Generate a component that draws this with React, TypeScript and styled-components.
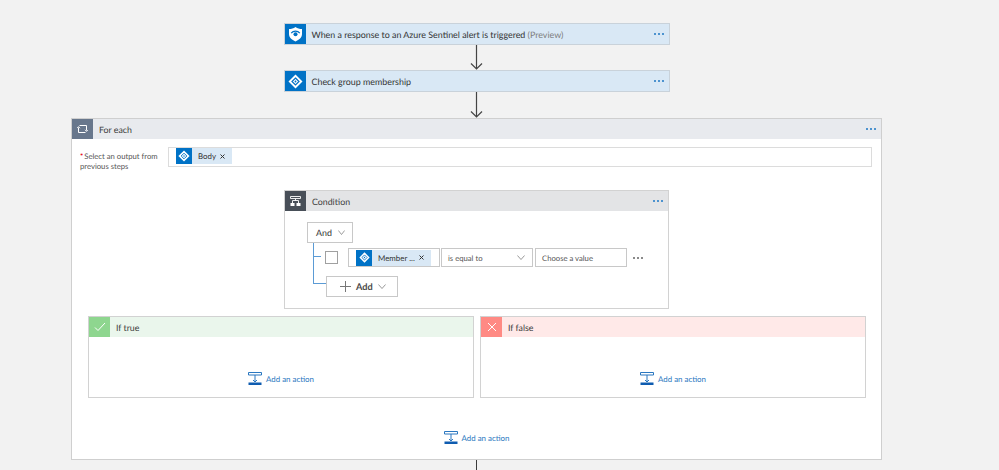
import React from "react";
import styled, { createGlobalStyle } from "styled-components";

const Global = createGlobalStyle`
  html, body { margin: 0; padding: 0; background: #f2f2f2; }
  body { width: 999px; height: 470px; overflow: hidden; font-family: Lato, "Noto Sans", "Liberation Sans", sans-serif; color: #3b3b3b; text-rendering: geometricPrecision; }
  * { box-sizing: border-box; }
`;

const Page = styled.div`
  display: flex;
  flex-direction: column;
  align-items: center;
  width: 811px;
  margin-left: 71px;
  padding-top: 23px;
`;

const StepCard = styled.div`
  display: flex;
  align-items: stretch;
  width: 386px;
  height: 22px;
  background: #d9e8f5;
  border: 1px solid #c9d2da;
`;

const IconTile = styled.div<{ $bg: string; $w?: number }>`
  flex: none;
  width: ${(p) => p.$w ?? 21}px;
  display: flex;
  align-items: center;
  justify-content: center;
  background: ${(p) => p.$bg};
`;

const StepTitle = styled.div`
  flex: 1;
  display: flex;
  align-items: center;
  padding: 1px 0 0 6px;
  font-size: 8.9px;
  color: #333;
  white-space: pre;
`;

const Muted = styled.span`
  color: #7d7d7d;
`;

const Dots = styled.div<{ $c?: string }>`
  flex: none;
  width: 15px;
  display: flex;
  align-items: center;
  justify-content: flex-start;
  gap: 2px;
  span {
    width: 2px;
    height: 2px;
    background: ${(p) => p.$c ?? "#4d93cf"};
  }
`;

const Loop = styled.div`
  width: 811px;
  height: 342px;
  background: #fff;
  border: 1px solid #cfcfcf;
  display: flex;
  flex-direction: column;
`;

const LoopHeader = styled.div`
  height: 20px;
  display: flex;
  align-items: stretch;
  background: #e8eaee;
`;

const HeadTitle = styled.div`
  flex: 1;
  display: flex;
  align-items: center;
  padding: 1px 0 0 6px;
  font-size: 8.8px;
  color: #3b3b3b;
`;

const OutputRow = styled.div`
  display: flex;
  margin-top: 8px;
  padding-left: 8px;
`;

const OutputLabel = styled.div`
  width: 88px;
  padding-top: 4px;
  font-size: 7.7px;
  line-height: 10px;
  color: #555;
  b { color: #e81123; font-weight: 700; margin-right: 1px; }
`;

const OutputInput = styled.div`
  width: 704px;
  height: 20px;
  border: 1px solid #dcdcdc;
  padding-left: 7px;
  background: #fff;
`;

const Token = styled.div<{ $w: number }>`
  display: flex;
  align-items: center;
  width: ${(p) => p.$w}px;
  height: 16px;
  background: #d9e8f5;
  font-size: 7.9px;
  color: #333;
`;

const TokenText = styled.span`
  flex: 1;
  padding-left: 6px;
  white-space: nowrap;
`;

const TokenClose = styled.span`
  flex: none;
  display: flex;
  margin-right: 7px;
`;

const Condition = styled.div`
  width: 385px;
  height: 119px;
  margin: 19px 0 0 212px;
  border: 1px solid #d2d2d2;
  background: #fff;
`;

const ConditionHeader = styled.div`
  height: 20px;
  display: flex;
  background: #e3e4e6;
`;

const ConditionBody = styled.div`
  position: relative;
  height: 97px;
  padding: 11px 0 0 22px;
`;

const AndButton = styled.div`
  width: 46px;
  height: 21px;
  display: flex;
  align-items: center;
  padding-left: 8px;
  gap: 6px;
  border: 1px solid #c8c8c8;
  font-size: 8.9px;
  color: #333;
  background: #fff;
`;

const ClauseRow = styled.div`
  display: flex;
  align-items: center;
  height: 19px;
  margin: 5px 0 0 18px;
`;

const Check = styled.div`
  width: 13px;
  height: 13px;
  border: 1px solid #a0a0a0;
  background: #fff;
  margin-right: 10px;
`;

const Field = styled.div<{ $w: number; $pad?: number }>`
  width: ${(p) => p.$w}px;
  height: 19px;
  margin-right: 1px;
  border: 1px solid #c8c8c8;
  display: flex;
  align-items: center;
  justify-content: space-between;
  padding: 0 7px 0 ${(p) => p.$pad ?? 6}px;
  font-size: 7.7px;
  color: #555;
  background: #fff;
`;

const FieldGap = styled.div`
  width: 1px;
`;

const ClauseDots = styled.div`
  margin-left: 5px;
  display: flex;
  gap: 2px;
  span { width: 2px; height: 2px; background: #8a8a8a; }
`;

const AddButton = styled.div`
  width: 72px;
  height: 21px;
  margin: 9px 0 0 19px;
  border: 1px solid #c8c8c8;
  display: flex;
  align-items: center;
  padding-left: 13px;
  gap: 5px;
  font-size: 9.2px;
  font-weight: 700;
  color: #4a4a4a;
  background: #fff;
`;

const TreeLine = styled.div`
  position: absolute;
  left: 28px;
  top: 32px;
  width: 13px;
  height: 41px;
  border-left: 1px solid #5b9bd5;
  border-bottom: 1px solid #5b9bd5;
`;

const TreeTick = styled.div`
  position: absolute;
  left: 29px;
  top: 45px;
  width: 7px;
  height: 1px;
  background: #5b9bd5;
`;

const Branches = styled.div`
  display: flex;
  gap: 6px;
  margin: 7px 0 0 16px;
`;

const Branch = styled.div`
  width: 386px;
  height: 82px;
  display: flex;
  flex-direction: column;
  border: 1px solid #d2d2d2;
  background: #fff;
`;

const BranchHeader = styled.div<{ $bg: string }>`
  height: 20px;
  display: flex;
  background: ${(p) => p.$bg};
`;

const ActionRow = styled.div<{ $top: number }>`
  display: flex;
  align-items: center;
  justify-content: center;
  gap: 4px;
  margin-top: ${(p) => p.$top}px;
  font-size: 7.9px;
  color: #2a77c0;
`;

const ActionLabel = styled.span`
  padding-top: 1px;
`;

const Connector = styled.div`
  width: 1px;
  height: 12px;
  background: #3b3b3b;
`;

const ArrowSvg = styled.svg`
  display: block;
`;

const Arrow = ({ h = 25 }: { h?: number }) => (
  <ArrowSvg width="13" height={h} viewBox={`0 0 13 ${h}`}>
    <path d={`M6.5 0V${h - 1}M1 ${h - 6.5}L6.5 ${h - 1}L12 ${h - 6.5}`} fill="none" stroke="#444" strokeWidth="1.2" />
  </ArrowSvg>
);

const Shield = () => (
  <svg width="15" height="16" viewBox="0 0 15 16">
    <path d="M7.5 1C9.5 2.4 11.6 3 14 3V8C14 11.5 11.2 13.8 7.5 15.5C3.8 13.8 1 11.5 1 8V3C3.4 3 5.5 2.4 7.5 1Z" fill="#fff" />
    <path d="M3.2 7.2C5.4 4.4 9.6 4.4 11.8 7.2" fill="none" stroke="#0072c6" strokeWidth="1.2" />
    <circle cx="7.5" cy="8.2" r="2" fill="#0072c6" />
  </svg>
);

const Diamond = ({ s = 15, c = "#0072c6" }: { s?: number; c?: string }) => (
  <svg width={s} height={s} viewBox="0 0 15 15">
    <path d="M7.5 0.5L14.5 7.5L7.5 14.5L0.5 7.5Z" fill="#fff" />
    <path d="M7.5 4L11 7.5L7.5 11L4 7.5Z" fill="none" stroke={c} strokeWidth="1.2" />
    <circle cx="7.5" cy="7.5" r="0.9" fill={c} />
  </svg>
);

const LoopIcon = () => (
  <svg width="11" height="8" viewBox="0 0 11 8">
    <path d="M2.5 0.5H9.5V5.5M8.5 7.5H1.5V2.5" fill="none" stroke="#fff" strokeWidth="1" />
    <path d="M0 3.2L1.5 1.6L3 3.2M8 4.8L9.5 6.4L11 4.8" fill="none" stroke="#fff" strokeWidth="0.9" />
  </svg>
);

const ConditionIcon = () => (
  <svg width="11" height="10" viewBox="0 0 11 10">
    <path d="M0.5 0.5H10.5V2.5H0.5Z M5.5 2.5V4.5 M2.5 4.5H8.5 M2.5 4.5V7 M8.5 4.5V7" fill="none" stroke="#fff" strokeWidth="0.9" />
    <path d="M0.5 7H4.5V10H0.5Z M6.5 7H10.5V10H6.5Z" fill="#fff" />
  </svg>
);

const CheckIcon = () => (
  <svg width="12" height="10" viewBox="0 0 12 10">
    <path d="M1 5.5L4 8.5L11 1" fill="none" stroke="#fff" strokeWidth="1" />
  </svg>
);

const CrossIcon = () => (
  <svg width="10" height="10" viewBox="0 0 10 10">
    <path d="M1 1L9 9M9 1L1 9" fill="none" stroke="#fff" strokeWidth="1" />
  </svg>
);

const X = () => (
  <svg width="5" height="5" viewBox="0 0 5 5">
    <path d="M0.5 0.5L4.5 4.5M4.5 0.5L0.5 4.5" stroke="#333" strokeWidth="1" />
  </svg>
);

const Chevron = ({ w = 8 }: { w?: number }) => (
  <svg width={w} height="5" viewBox="0 0 9 5" preserveAspectRatio="none">
    <path d="M0.5 0.5L4.5 4.5L8.5 0.5" fill="none" stroke="#777" strokeWidth="0.8" />
  </svg>
);

const Plus = () => (
  <svg width="11" height="11" viewBox="0 0 11 11">
    <path d="M5.5 0V11M0 5.5H11" stroke="#777" strokeWidth="1" />
  </svg>
);

const ActionIcon = () => (
  <svg width="14" height="13" viewBox="0 0 14 13">
    <path d="M0.5 0.5H13.5V3H0.5Z" fill="none" stroke="#2a77c0" strokeWidth="1" />
    <path d="M7 3V10M5 8L7 10L9 8" fill="none" stroke="#2a77c0" strokeWidth="1" />
    <rect x="0.5" y="10.5" width="13" height="2.5" fill="#0f5cb0" />
  </svg>
);

const ThreeDots = ({ c }: { c?: string }) => (
  <Dots $c={c}>
    <span />
    <span />
    <span />
  </Dots>
);

const AddAction = ({ top }: { top: number }) => (
  <ActionRow $top={top}>
    <ActionIcon />
    <ActionLabel>Add an action</ActionLabel>
  </ActionRow>
);

const TokenTile = styled(IconTile)<{ $h: number }>`
  height: ${(p) => p.$h}px;
`;

export default function App() {
  return (
    <>
      <Global />
      <Page>
        <StepCard>
          <IconTile $bg="#0072c6"><Shield /></IconTile>
          <StepTitle>When a response to an Azure Sentinel alert is triggered <Muted>(Preview)</Muted></StepTitle>
          <ThreeDots />
        </StepCard>
        <Arrow />
        <StepCard>
          <IconTile $bg="#0072c6"><Diamond /></IconTile>
          <StepTitle>Check group membership</StepTitle>
          <ThreeDots />
        </StepCard>
        <Arrow h={26} />
        <Loop>
          <LoopHeader>
            <IconTile $bg="#68778c"><LoopIcon /></IconTile>
            <HeadTitle>For each</HeadTitle>
            <ThreeDots />
          </LoopHeader>
          <OutputRow>
            <OutputLabel><b>*</b>Select an output from<br />previous steps</OutputLabel>
            <OutputInput>
              <Token $w={56}>
                <TokenTile $bg="#0072c6" $w={16} $h={16}><Diamond s={12} /></TokenTile>
                <TokenText>Body</TokenText>
                <TokenClose><X /></TokenClose>
              </Token>
            </OutputInput>
          </OutputRow>
          <Condition>
            <ConditionHeader>
              <IconTile $bg="#484f58"><ConditionIcon /></IconTile>
              <HeadTitle>Condition</HeadTitle>
              <ThreeDots />
            </ConditionHeader>
            <ConditionBody>
              <TreeLine />
              <TreeTick />
              <AndButton>And <Chevron w={7} /></AndButton>
              <ClauseRow>
                <Check />
                <Field $w={92} $pad={7}>
                  <Token $w={75}>
                    <TokenTile $bg="#0072c6" $w={16} $h={16}><Diamond s={11} /></TokenTile>
                    <TokenText>Member ...</TokenText>
                    <TokenClose><X /></TokenClose>
                  </Token>
                </Field>
                <Field $w={92}>is equal to <Chevron /></Field>
                <FieldGap />
                <Field $w={92}>Choose a value</Field>
                <ClauseDots><span /><span /><span /></ClauseDots>
              </ClauseRow>
              <AddButton><Plus />Add <Chevron /></AddButton>
            </ConditionBody>
          </Condition>
          <Branches>
            <Branch>
              <BranchHeader $bg="#eaf6ec">
                <IconTile $bg="#8ed68f"><CheckIcon /></IconTile>
                <HeadTitle>If true</HeadTitle>
              </BranchHeader>
              <AddAction top={35} />
            </Branch>
            <Branch>
              <BranchHeader $bg="#ffe9e8">
                <IconTile $bg="#ff8a84"><CrossIcon /></IconTile>
                <HeadTitle>If false</HeadTitle>
              </BranchHeader>
              <AddAction top={35} />
            </Branch>
          </Branches>
          <AddAction top={33} />
        </Loop>
        <Connector />
      </Page>
    </>
  );
}
